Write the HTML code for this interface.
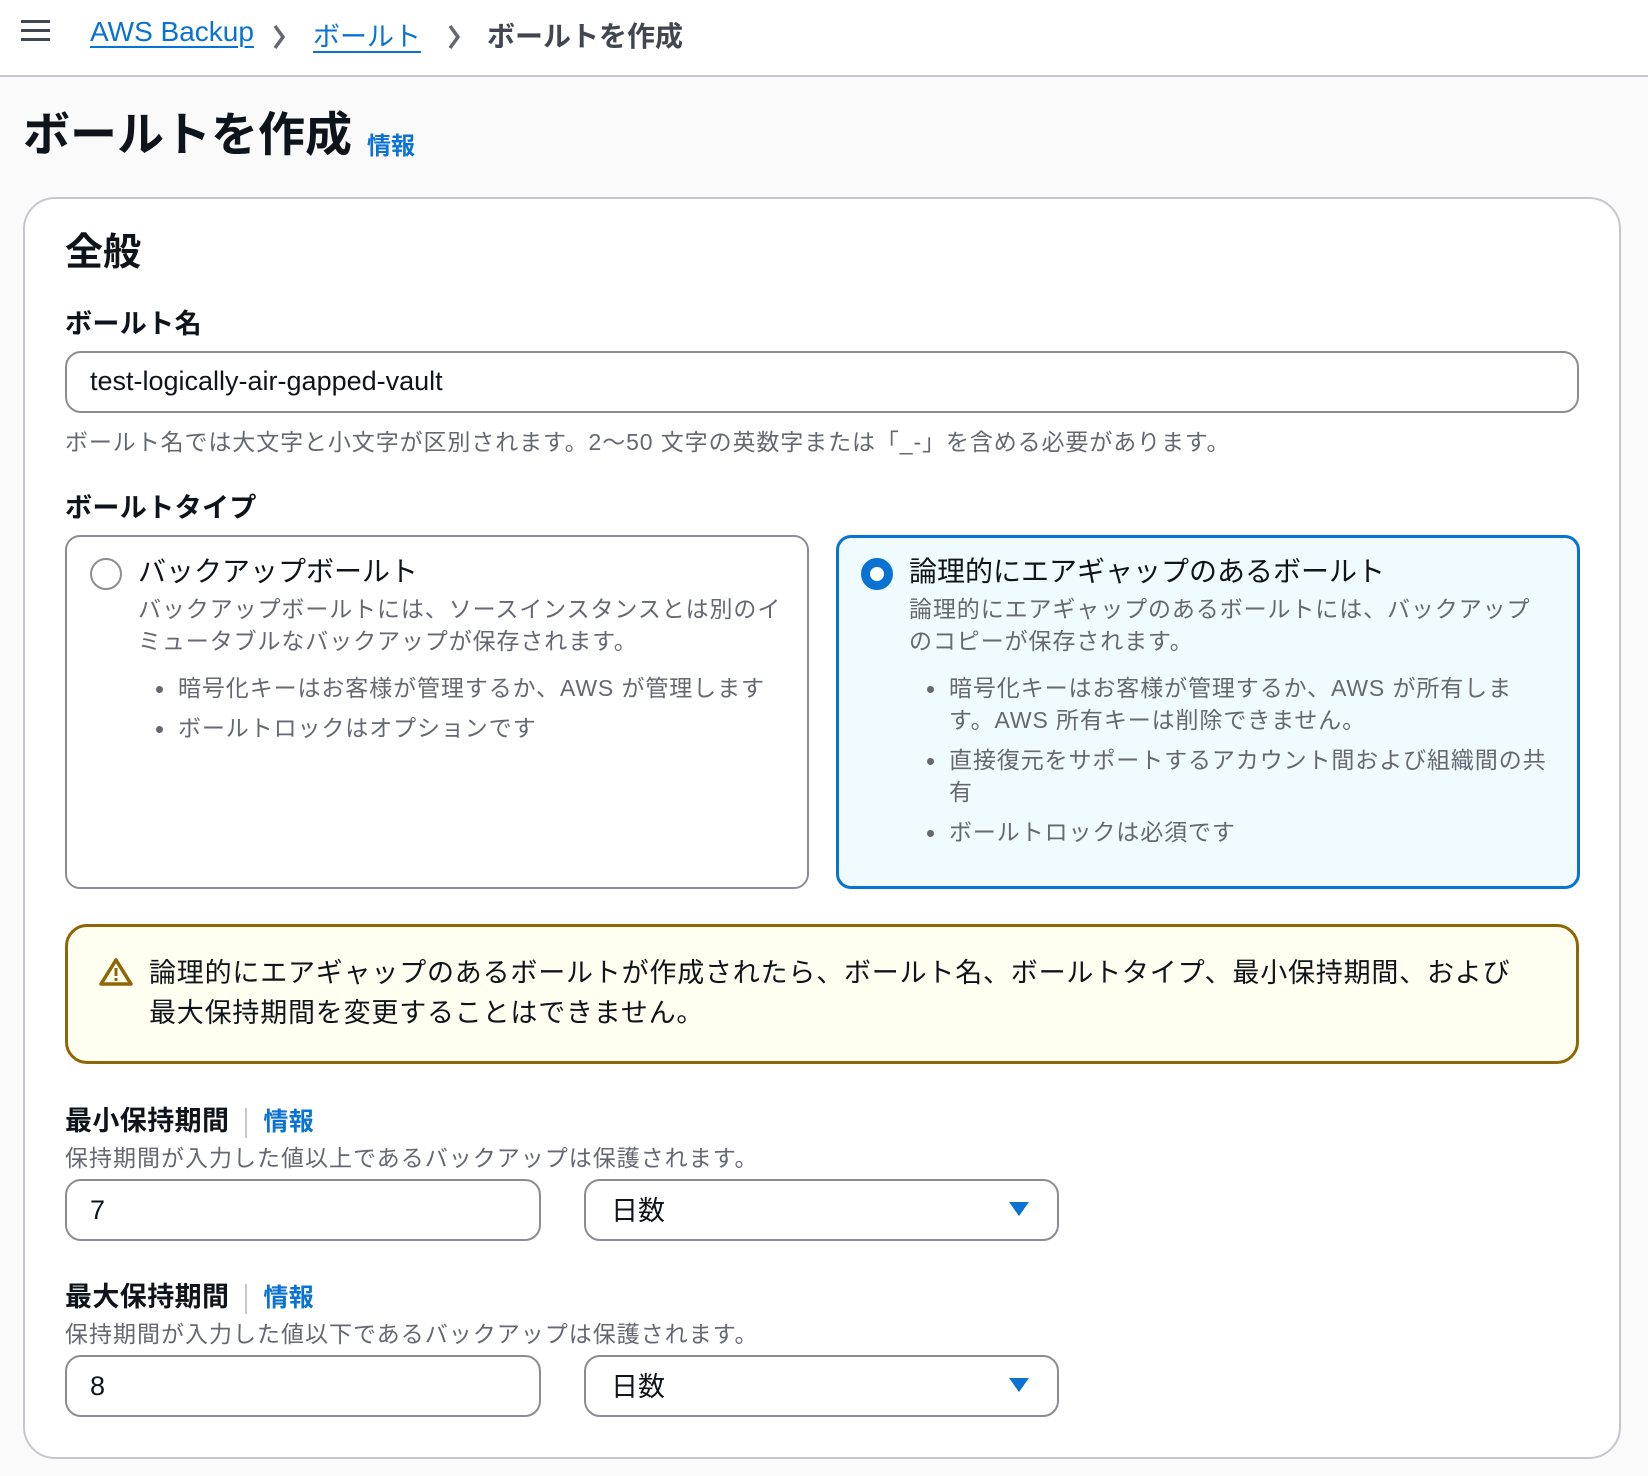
<!DOCTYPE html>
<html><head><meta charset="utf-8">
<style>
*{margin:0;padding:0;box-sizing:border-box}
body{width:1648px;height:1476px;background:#fafafa;font-family:"Liberation Sans","Noto Sans CJK JP",sans-serif;color:#0f141a;position:relative;overflow:hidden}
.a{position:absolute;white-space:nowrap}
.hdr{position:absolute;left:0;top:0;width:1648px;height:77px;background:#fff;border-bottom:2px solid #c6c6cd}
.lnk{color:#0972d3;text-decoration:underline;text-underline-offset:5px;text-decoration-thickness:2px}
.card{position:absolute;left:23px;top:197px;width:1598px;height:1262px;background:#fff;border:2px solid #c6c6cd;border-radius:32px}
.inp{position:absolute;background:#fff;border:2px solid #8c8c94;border-radius:16px}
.lbl{font-weight:bold;font-size:27px;letter-spacing:0.4px}
.help{color:#656871;font-size:23px;letter-spacing:1px}
.rc{position:absolute;top:535px;width:744px;height:354px;border:2px solid #8c8c94;border-radius:15px;background:#fff}
.rt{font-size:28px;line-height:34px}
.rd{font-size:23px;line-height:32px;color:#656871;letter-spacing:0.9px}
ul{list-style:none}
li{position:relative;font-size:23px;line-height:32px;color:#656871;margin-bottom:8px;letter-spacing:0.9px}
li:before{content:"";position:absolute;left:-22px;top:14px;width:7px;height:7px;border-radius:50%;background:#656871}
.sep{display:inline-block;width:2px;height:30px;background:#c6c6cd;vertical-align:middle;margin:0 16px}
</style></head><body>
<div class="hdr">
  <svg class="a" style="left:21px;top:20px" width="29" height="22"><rect y="0" width="29" height="3" fill="#424650"/><rect y="9" width="29" height="3" fill="#424650"/><rect y="18" width="29" height="3" fill="#424650"/></svg>
  <div class="a" style="left:90px;top:16px;font-size:28px"><span class="lnk">AWS Backup</span></div>
  <svg class="a" style="left:272px;top:24px" width="14" height="26"><path d="M3 2 L11 13 L3 24" stroke="#656871" stroke-width="3.5" fill="none"/></svg>
  <div class="a" style="left:313px;top:15px;font-size:27px"><span class="lnk">ボールト</span></div>
  <svg class="a" style="left:447px;top:24px" width="14" height="26"><path d="M3 2 L11 13 L3 24" stroke="#656871" stroke-width="3.5" fill="none"/></svg>
  <div class="a" style="left:487px;top:15px;font-size:28px;font-weight:bold;color:#424650">ボールトを作成</div>
</div>
<div class="a" style="left:23px;top:103px;font-size:47px;font-weight:bold;line-height:64px">ボールトを作成</div>
<div class="a" style="left:367px;top:126px;font-size:24px;font-weight:bold;color:#0972d3">情報</div>
<div class="card"></div>
<div class="a" style="left:65px;top:229px;font-size:38px;font-weight:bold;line-height:48px">全般</div>
<div class="a lbl" style="left:65px;top:302px">ボールト名</div>
<div class="inp" style="left:65px;top:351px;width:1514px;height:62px"></div>
<div class="a" style="left:90px;top:366px;font-size:27px">test-logically-air-gapped-vault</div>
<div class="a help" style="left:65px;top:423px;letter-spacing:0.9px">ボールト名では大文字と小文字が区別されます。2～50 文字の英数字または「_-」を含める必要があります。</div>
<div class="a lbl" style="left:65px;top:486px">ボールトタイプ</div>

<div class="rc" style="left:65px">
  <div class="a" style="left:23px;top:21px;width:32px;height:32px;border:2px solid #8c8c94;border-radius:50%"></div>
  <div class="a rt" style="left:71px;top:18px">バックアップボールト</div>
  <div class="a rd" style="left:71px;top:56px">バックアップボールトには、ソースインスタンスとは別のイ<br>ミュータブルなバックアップが保存されます。</div>
  <ul class="a" style="left:111px;top:135px"><li>暗号化キーはお客様が管理するか、AWS が管理します</li><li>ボールトロックはオプションです</li></ul>
</div>
<div class="rc" style="left:836px;border:3px solid #0972d3;background:#f0fbff">
  <div class="a" style="left:22px;top:20px;width:32px;height:32px;border:9px solid #0972d3;border-radius:50%;background:#fff"></div>
  <div class="a rt" style="left:70px;top:17px">論理的にエアギャップのあるボールト</div>
  <div class="a rd" style="left:70px;top:55px">論理的にエアギャップのあるボールトには、バックアップ<br>のコピーが保存されます。</div>
  <ul class="a" style="left:110px;top:134px"><li>暗号化キーはお客様が管理するか、AWS が所有しま<br>す。AWS 所有キーは削除できません。</li><li>直接復元をサポートするアカウント間および組織間の共<br>有</li><li>ボールトロックは必須です</li></ul>
</div>

<div class="a" style="left:65px;top:924px;width:1514px;height:140px;border:3px solid #8d6605;border-radius:22px;background:#fffef0"></div>
<svg class="a" style="left:99px;top:957px" width="34" height="30"><path d="M17 3 L32 27 L2 27 Z" stroke="#8d6605" stroke-width="3.5" fill="none" stroke-linejoin="round"/><rect x="15.5" y="11" width="3" height="8" fill="#8d6605"/><rect x="15.5" y="21" width="3" height="3" fill="#8d6605"/></svg>
<div class="a" style="left:149px;top:953px;font-size:27px;line-height:40px;letter-spacing:0.8px">論理的にエアギャップのあるボールトが作成されたら、ボールト名、ボールトタイプ、最小保持期間、および<br>最大保持期間を変更することはできません。</div>

<div class="a lbl" style="left:65px;top:1099px">最小保持期間<span class="sep"></span><span style="color:#0972d3;font-size:25px">情報</span></div>
<div class="a help" style="left:65px;top:1139px">保持期間が入力した値以上であるバックアップは保護されます。</div>
<div class="inp" style="left:65px;top:1179px;width:476px;height:62px"></div>
<div class="a" style="left:90px;top:1195px;font-size:27px">7</div>
<div class="inp" style="left:584px;top:1179px;width:475px;height:62px"></div>
<div class="a" style="left:611px;top:1189px;font-size:27px">日数</div>
<svg class="a" style="left:1008px;top:1201px" width="22" height="16"><path d="M1 1 L21 1 L11 15 Z" fill="#0972d3"/></svg>

<div class="a lbl" style="left:65px;top:1275px">最大保持期間<span class="sep"></span><span style="color:#0972d3;font-size:25px">情報</span></div>
<div class="a help" style="left:65px;top:1315px">保持期間が入力した値以下であるバックアップは保護されます。</div>
<div class="inp" style="left:65px;top:1355px;width:476px;height:62px"></div>
<div class="a" style="left:90px;top:1371px;font-size:27px">8</div>
<div class="inp" style="left:584px;top:1355px;width:475px;height:62px"></div>
<div class="a" style="left:611px;top:1365px;font-size:27px">日数</div>
<svg class="a" style="left:1008px;top:1377px" width="22" height="16"><path d="M1 1 L21 1 L11 15 Z" fill="#0972d3"/></svg>
</body></html>
